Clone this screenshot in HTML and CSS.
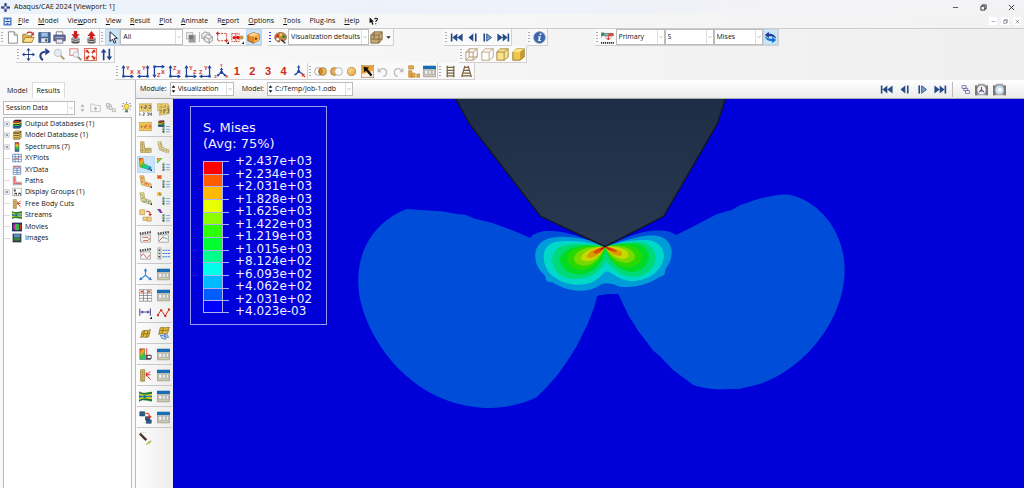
FILE: index.html
```html
<!DOCTYPE html>
<html lang="en">
<head>
<meta charset="utf-8">
<title>Abaqus/CAE 2024 [Viewport: 1]</title>
<link rel="stylesheet" href="styles.css">
</head>
<body>
<svg class="sprites" aria-hidden="true">
  <defs>
    <linearGradient id="gold" x1="0" y1="0" x2="1" y2="1"><stop offset="0" stop-color="#ffe9a8"/><stop offset="1" stop-color="#e0a030"/></linearGradient>
    <linearGradient id="rainbow" x1="0" y1="0" x2="0" y2="1"><stop offset="0" stop-color="#e22"/><stop offset=".3" stop-color="#fc2"/><stop offset=".6" stop-color="#2c3"/><stop offset="1" stop-color="#16d"/></linearGradient>
    <linearGradient id="rainbow-l" x1="0" y1="0" x2="1" y2="1"><stop offset="0" stop-color="#e22"/><stop offset=".25" stop-color="#fa2"/><stop offset=".45" stop-color="#3c3"/><stop offset=".75" stop-color="#1cc"/><stop offset="1" stop-color="#13c"/></linearGradient>
  </defs>
  <symbol id="app" viewBox="0 0 16 16"><path d="M6 1h4v5h5v4h-5v5H6v-5H1V6h5z" fill="#8a93c4" stroke="#4a5590"/><path d="M8 0v16M0 8h16" stroke="#2f3a78" stroke-width="1.6"/><circle cx="8" cy="8" r="2" fill="#fff"/></symbol>
  <symbol id="doc" viewBox="0 0 16 16"><path d="M1 1h14v14H1z" fill="#2c5fb8"/><path d="M3 3h10v10H3z" fill="#dce8fa"/><path d="M8 2l2 3H6zM8 14l2-3H6zM4 7h8v2H4z" fill="#1b469c"/></symbol>
  <symbol id="new" viewBox="0 0 16 16"><path d="M3 1h7l4 4v10H3z" fill="#fff" stroke="#777"/><path d="M10 1v4h4" fill="#ddd" stroke="#777"/></symbol>
  <symbol id="open" viewBox="0 0 16 16"><path d="M1 14V4h4l1 2h6v8z" fill="#e6b64c" stroke="#9b772a"/><path d="M1 14l3-6h11l-3 6z" fill="#ffe08a" stroke="#9b772a"/><path d="M6 3c2-2 5-2 7 0" fill="none" stroke="#d02b1c" stroke-width="1.600"/><path d="M14.500 1v4.500h-4z" fill="#d02b1c"/></symbol>
  <symbol id="save" viewBox="0 0 16 16"><path d="M1 2h14v12H1z" fill="#47689c" stroke="#36507a"/><path d="M4 2h8v5H4z" fill="#9fc0e4"/><path d="M4 9h8v5H4z" fill="#e9e9e9"/><path d="M9 10h2v3H9z" fill="#333"/></symbol>
  <symbol id="print" viewBox="0 0 16 16"><path d="M4 1h8v5H4z" fill="#fff" stroke="#667"/><path d="M1 5h14v7H1z" fill="#646c9c" stroke="#464c78"/><path d="M4 10h8v5H4z" fill="#e8ecf8" stroke="#667"/><path d="M3 8h10" stroke="#b4bde0"/></symbol>
  <symbol id="db-in" viewBox="0 0 16 16"><path d="M3 9v5c2 2 8 2 10 0V9z" fill="#555"/><ellipse cx="8" cy="9" rx="5" ry="2" fill="#aaa"/><path d="M3 11.500c3 1.500 7 1.500 10 0" stroke="#eee" fill="none"/><path d="M6 0h4v4h3L8 10 3 4h3z" fill="#cf1d1d"/></symbol>
  <symbol id="db-out" viewBox="0 0 16 16"><path d="M3 9v5c2 2 8 2 10 0V9z" fill="#555"/><ellipse cx="8" cy="9" rx="5" ry="2" fill="#aaa"/><path d="M3 12c3 1.500 7 1.500 10 0" stroke="#eee" fill="none"/><path d="M6 10h4V6h3L8 0 3 6h3z" fill="#cf1d1d"/></symbol>
  <symbol id="cursor" viewBox="0 0 16 16"><path d="M5 1v12l3-3 2 5 2-1-2-5h4z" fill="#fff" stroke="#223" stroke-width="1.200"/></symbol>
  <symbol id="overlap" viewBox="0 0 16 16"><path d="M3 2h8v8H3z" fill="#eee" stroke="#aaa"/><path d="M6 5h8v9H6z" fill="#999" stroke="#bbb"/><path d="M6 5h5v5H6z" fill="#777"/></symbol>
  <symbol id="cubes" viewBox="0 0 16 16"><g fill="#eee" stroke="#888"><path d="M1 4l4-3 6 2v5l-4 3-6-2z"/><path d="M4 7l4-3 6 3v5l-4 3-6-3z"/><path d="M4 7l6 3 4-3M10 10v5"/></g></symbol>
  <symbol id="rect-sel" viewBox="0 0 16 16"><path d="M2 3h11v9H2z" fill="none" stroke="#c8321e" stroke-dasharray="3 1"/><path d="M0 3h4M2 1v4M11 12h4M13 10v4" stroke="#c8321e" stroke-width="1.400"/><path d="M16 13v3h-3z" fill="#222"/></symbol>
  <symbol id="dots-sel" viewBox="0 0 16 16"><path d="M1 3h9v10H1z" fill="none" stroke="#c8321e" stroke-dasharray="2 1"/><circle cx="4" cy="8" r="2" fill="#d11"/><circle cx="8.500" cy="8" r="2.200" fill="#d11"/><circle cx="13" cy="8" r="2" fill="#e9a421" stroke="#84561c" stroke-width=".6"/><path d="M6 3v10" stroke="#d11"/><path d="M16 13v3h-3z" fill="#222"/></symbol>
  <symbol id="cube-3d" viewBox="0 0 16 16"><path d="M1 5l7-3 7 2v7l-7 4-7-3z" fill="#e28a23" stroke="#8d5418"/><path d="M1 5l7 2 7-3-7-2z" fill="#ffd38a"/><path d="M8 7v8" stroke="#8d5418"/><path d="M8 7l7-3v7l-7 4z" fill="#f6b04c"/><circle cx="11" cy="9.500" r="1.500" fill="#7a4515"/></symbol>
  <symbol id="palette" viewBox="0 0 16 16"><path d="M8 2c5 0 8 3 7 7s-5 3-6 2-2 0-2 2-6-1-6-5 3-6 7-6z" fill="#c58b4e" stroke="#7a4e22"/><circle cx="4.500" cy="6" r="1.700" fill="#d22"/><circle cx="8.500" cy="4.500" r="1.600" fill="#f5d835"/><circle cx="12" cy="7" r="1.700" fill="#1b8a35"/><circle cx="4.500" cy="10" r="1.500" fill="#fff"/><path d="M9 11l5 4" stroke="#222" stroke-width="1.500"/></symbol>
  <symbol id="cube-brown" viewBox="0 0 16 16"><path d="M1 5l4-4h10v9l-4 5H1z" fill="#c4a876" stroke="#7d6539"/><path d="M1 5h10v10M11 5l4-4M5 1v9H1M5 10h10" fill="none" stroke="#7d6539"/></symbol>
  <symbol id="caret" viewBox="0 0 16 16"><path d="M1 4h14l-7 8z" fill="#222"/></symbol>
  <symbol id="first" viewBox="0 0 16 16"><path d="M1 3h2v10H1zM9 3v10L3 8zM15.500 3v10L9 8z" fill="#254a87"/></symbol>
  <symbol id="prev" viewBox="0 0 16 16"><path d="M9 3v10L3 8zM11 3h2v10h-2z" fill="#254a87"/></symbol>
  <symbol id="next" viewBox="0 0 16 16"><path d="M3 3h2v10H3z" fill="#254a87"/><path d="M7 3.500v9l6-4.500z" fill="#7d9cc9" stroke="#254a87"/></symbol>
  <symbol id="last" viewBox="0 0 16 16"><path d="M13 3h2v10h-2zM7 3v10l6-5zM.5 3v10L7 8z" fill="#254a87"/></symbol>
  <symbol id="info" viewBox="0 0 16 16"><circle cx="8" cy="8" r="7.300" fill="#3c67ae" stroke="#9aa8c0"/><path d="M8.500 3h2l-.4 2h-2zM6.500 6.500h3L8.500 11h1.200v1.200H6.200L7.300 7.700h-1z" fill="#fff"/></symbol>
  <symbol id="field" viewBox="0 0 16 16"><path d="M1 1v7M0 5l4-2h11v3H5z" fill="#8fbcc4" stroke="#345" stroke-width=".7"/><path d="M1 2h3v3H1z" fill="#2b8b51"/><path d="M9 3h6v3H9z" fill="#d8452f"/><path d="M9 6v5M6 8l3 3 3-3" stroke="#c22" fill="none" stroke-width="1.200"/><path d="M0 14.500h16" stroke="#222" stroke-width="2.200" stroke-dasharray="1.500 1"/></symbol>
  <symbol id="sync" viewBox="0 0 16 16"><path d="M6 1L1 5l5 4V6.500c4-.5 7 1 9 3C14 5 10 3.200 6 3.500z" fill="#1e3f98"/><path d="M10 15l5-4-5-4v2.500c-4 .5-7-1-9-3C2 11 6 12.800 10 12.500z" fill="#1673cf"/></symbol>
  <symbol id="pan" viewBox="0 0 16 16"><path d="M8 0l2.500 3h-2v4.500H13v-2L16 8l-3 2.500v-2H8.500V13h2L8 16l-2.500-3h2V8.500H3v2L0 8l3-2.500v2h4.500V3h-2z" fill="#243f88"/></symbol>
  <symbol id="rotate" viewBox="0 0 16 16"><path d="M6 15C1 11 2 5 9 4.500" fill="none" stroke="#243f88" stroke-width="2.400"/><path d="M9 0l6 4.500L9 9z" fill="#243f88"/></symbol>
  <symbol id="zoom" viewBox="0 0 16 16"><circle cx="6" cy="6" r="4.500" fill="#e6ebee" stroke="#b4bbc0"/><path d="M9.500 9.500L14 14" stroke="#b09c7c" stroke-width="2.500"/></symbol>
  <symbol id="zoom-box" viewBox="0 0 16 16"><path d="M1 1h10v8H1z" fill="none" stroke="#d8604e"/><circle cx="8.500" cy="8" r="3.500" fill="#eef" stroke="#abb"/><path d="M11 11l4 4" stroke="#9c8b6f" stroke-width="2.300"/></symbol>
  <symbol id="fit" viewBox="0 0 16 16"><path d="M.5.500h15v15H.5z" fill="#fff" stroke="#d23a22"/><path d="M2 2h4L4.800 3.200 7 5.500 5.500 7 3.200 4.800 2 6zM14 2v4l-1.200-1.200L10.500 7 9 5.500l2.200-2.300L10 2zM2 14v-4l1.200 1.200L5.500 9 7 10.500l-2.200 2.300L6 14zM14 14h-4l1.200-1.200L9 10.500 10.500 9l2.300 2.200L14 10z" fill="#d23a22"/></symbol>
  <symbol id="updown" viewBox="0 0 16 16"><path d="M4.500 1L8 5.500H5.500V15h-2V5.500H1zM11.500 15L8 10.500h2.500V1h2v9.500H15z" fill="#243f88"/></symbol>
  <symbol id="box-wire" viewBox="0 0 16 16"><path d="M1 5h9v10H1zM5 1h10v10H5zM1 5l4-4M10 5l5-4M10 15l5-4M1 15l4-4" fill="none" stroke="#a88d5a"/></symbol>
  <symbol id="box-hidden" viewBox="0 0 16 16"><path d="M1 5l4-4h10v10l-5 4H1z" fill="#fff" stroke="#b09a6c"/><path d="M1 5h9v10M10 5l5-4" fill="none" stroke="#b09a6c"/></symbol>
  <symbol id="box-fill" viewBox="0 0 16 16"><path d="M1 5l4-4h10v10l-5 4H1z" fill="#f7e48a" stroke="#a07d3a"/><path d="M1 5h9v10M10 5l5-4" fill="none" stroke="#a07d3a"/></symbol>
  <symbol id="box-shade" viewBox="0 0 16 16"><path d="M1 5l4-4h10v10l-5 4H1z" fill="#f0c84c" stroke="#8d6b1e"/><path d="M1 5l4-4h10l-5 4z" fill="#ffe684"/><path d="M10 5v10l5-4V1z" fill="#c79a30"/></symbol>
  <symbol id="ax-right" viewBox="0 0 16 16"><path d="M3 3v11h10" fill="none" stroke="#1c45a0" stroke-width="1.600"/><path d="M3 0l2.500 4H.5zM16 14l-4 2.500v-5zM1.500 12.500h3v3h-3z" fill="#1c45a0"/></symbol>
  <symbol id="ax-left" viewBox="0 0 16 16"><path d="M13 3v11H3" fill="none" stroke="#1c45a0" stroke-width="1.600"/><path d="M13 0l2.500 4h-5zM0 14l4 2.500v-5zM11.500 12.500h3v3h-3z" fill="#1c45a0"/></symbol>
  <symbol id="ax-down" viewBox="0 0 16 16"><path d="M3 13V2h10" fill="none" stroke="#1c45a0" stroke-width="1.600"/><path d="M3 16l2.500-4H.5zM16 2l-4 2.500v-5zM1.500.500h3v3h-3z" fill="#1c45a0"/></symbol>
  <symbol id="triad" viewBox="0 0 16 16"><path d="M8 4v5l-5 4M8 9l5 4" fill="none" stroke="#1c45a0" stroke-width="1.500"/><circle cx="8" cy="9" r="2" fill="#1c45a0"/><path d="M8 3l2 3H6zM2 14l1.500-3 2 2.500zM14 14l-3.500-.5 2-2.500z" fill="#1c45a0"/></symbol>
  <symbol id="triad-pick" viewBox="0 0 16 16"><path d="M7 2v6l-4 4M7 8l5 3" fill="none" stroke="#1c45a0" stroke-width="1.500"/><path d="M7 0l2 3H5zM1 13l1.500-3 2 2z" fill="#1c45a0"/><circle cx="7" cy="8" r="1.800" fill="#1c45a0"/><path d="M10 10l5 5M11 14l3-3" stroke="#d23a22" stroke-width="1.500"/></symbol>
  <symbol id="venn-and" viewBox="0 0 16 16"><circle cx="5.500" cy="8" r="4.800" fill="#fff" stroke="#999"/><circle cx="10.500" cy="8" r="4.800" fill="#f0b65c" stroke="#a67a3c"/><path d="M8 4a5 5 0 0 1 0 8 5 5 0 0 1 0-8z" fill="#d68c26" stroke="#916324"/></symbol>
  <symbol id="venn-sub" viewBox="0 0 16 16"><circle cx="5.500" cy="8" r="4.800" fill="#eba844" stroke="#a67a3c"/><circle cx="10.500" cy="8" r="4.800" fill="#fafafa" stroke="#aaa"/></symbol>
  <symbol id="venn-one" viewBox="0 0 16 16"><circle cx="8" cy="8" r="5" fill="url(#gold)" stroke="#b87b24"/></symbol>
  <symbol id="arrow-box" viewBox="0 0 16 16"><path d="M0 0h16v16H0z" fill="#f7efe0" stroke="#74542c"/><path d="M1 1h14v6L1 11z" fill="#e9a23a"/><path d="M3 2l7 1-2 2 6 7-2 2-6-7-2 2z" fill="#17110c"/></symbol>
  <symbol id="undo" viewBox="0 0 16 16"><path d="M4 7c4-5 10-2 9 3-.5 3-3 4-4 4" fill="none" stroke="#bbb" stroke-width="1.500"/><path d="M2 3v6h5z" fill="#bbb"/></symbol>
  <symbol id="redo" viewBox="0 0 16 16"><path d="M12 7C8 2 2 5 3 10c.5 3 3 4 4 4" fill="none" stroke="#bbb" stroke-width="1.500"/><path d="M14 3v6H9z" fill="#bbb"/></symbol>
  <symbol id="blocks" viewBox="0 0 16 16"><path d="M2 1h6v4H2zM2 7h4v8H2zM5 10h5v5H5zM12 11h4v4h-4z" fill="#eba844" stroke="#b4823a" stroke-width=".8"/></symbol>
  <symbol id="table" viewBox="0 0 16 16"><path d="M.5 1.500h15v13H.5z" fill="#ccc8b4" stroke="#a19e8c"/><path d="M0 1h16v4H0z" fill="#176db8"/><path d="M2 6.500h4v5H2zM7 6.500h3v5H7zM11.500 6.500H14v5h-2.500z" fill="#f1f2f5" stroke="#999" stroke-width=".6"/></symbol>
  <symbol id="ladder" viewBox="0 0 16 16"><path d="M4 1v14M12 1v14M3 3h10M3 6.500h10M3 10h10M3 13.500h10" stroke="#7a6540" stroke-width="1.500"/></symbol>
  <symbol id="ladder-p" viewBox="0 0 16 16"><path d="M6 1L2 15M10 1l4 14M5 3h6M4 6.500h8M3 10h10M2 13.500h12" stroke="#7a6540" stroke-width="1.500"/></symbol>
  <symbol id="tiles" viewBox="0 0 16 16"><path d="M2 1h7v5H2zM5 6h7v4H5zM8 10h7v5H8z" fill="#fff" stroke="#6a5ca5" stroke-width="1.400"/></symbol>
  <symbol id="camera-a" viewBox="0 0 16 16"><path d="M0 3h3l1-2h8l1 2h3v12H0z" fill="#a2a4a5"/><path d="M0 3h3v12H0zM13 3h3v12h-3z" fill="#77797b"/><circle cx="8" cy="8.500" r="5.200" fill="#eef6fb"/><path d="M8 5v4l-3 2M8 9l3 2" stroke="#2a62c0" fill="none" stroke-width="1.300"/><circle cx="8" cy="9" r="1.400" fill="#d22"/></symbol>
  <symbol id="camera-b" viewBox="0 0 16 16"><path d="M0 3h3l1-2h8l1 2h3v12H0z" fill="#a2a4a5"/><path d="M0 3h3v12H0zM13 3h3v12h-3z" fill="#77797b"/><circle cx="8" cy="8.500" r="5.200" fill="#d3e7f5"/><circle cx="8.500" cy="8.500" r="3.300" fill="#fff" stroke="#a8d0ea"/></symbol>
  <symbol id="chev" viewBox="0 0 16 16"><path d="M2 5l6 6 6-6" fill="none" stroke="#777" stroke-width="2"/></symbol>
  <symbol id="spin" viewBox="0 0 8 16"><path d="M4 2l3 4H1zM4 14l3-4H1z" fill="currentColor"/></symbol>
  <symbol id="folder-up" viewBox="0 0 16 16"><path d="M1 3h5l1 2h8v9H1z" fill="#f6f6f6" stroke="#b5b5b5"/><path d="M8 7l2.500 3H9v2H7v-2H5.500z" fill="#aaa"/></symbol>
  <symbol id="links" viewBox="0 0 16 16"><path d="M2 2h4v4H2zM6 7h4v4H6zM11 10h4v4h-4zM6 4h3v3M3 6v3h3" fill="none" stroke="#b0b0b0" stroke-width="1.300"/></symbol>
  <symbol id="bulb" viewBox="0 0 16 16"><path d="M8 3c4 0 4 4 2 6v2H6V9C4 7 4 3 8 3z" fill="#ffe44a" stroke="#a48b10"/><path d="M6 12h4v3H6z" fill="#476"/><path d="M8 0v1.500M1 6h2M13 6h2M2.500 1.500l1.500 1.500M13.500 1.500L12 3M2.500 11L4 9.500M13.500 11L12 9.500" stroke="#222"/></symbol>
  <symbol id="plus" viewBox="0 0 16 16"><path d="M2 2h12v12H2z" fill="#fff" stroke="#9aa3b3" stroke-width="1.500"/><path d="M5 8h6M8 5v6" stroke="#345" stroke-width="1.600"/></symbol>
  <symbol id="t-odb" viewBox="0 0 16 16"><path d="M2 3l3-2h10v11l-3 3H2z" fill="#1e222c"/><path d="M4 3h9l-2 2H2z" fill="#e33"/><path d="M1 6h10l4-2v2l-4 2H1z" fill="#f5c52c"/><path d="M1 9h10l4-2v2l-4 2H1z" fill="#3bb44a"/><path d="M1 12h10l4-2v2l-4 2H1z" fill="#2271cf"/></symbol>
  <symbol id="t-mdb" viewBox="0 0 16 16"><path d="M2 3l3-2h10v11l-3 3H2z" fill="#54431c"/><path d="M4 2h10l-2 2H2zM1 6h10l4-2v2l-4 2H1zM1 9h10l4-2v2l-4 2H1zM1 12h10l4-2v2l-4 2H1z" fill="#e5c56a"/></symbol>
  <symbol id="t-spec" viewBox="0 0 16 16"><path d="M5 1h6v14H5z" fill="url(#rainbow)" stroke="#333"/></symbol>
  <symbol id="t-plot" viewBox="0 0 16 16"><path d="M1 2h14v12H1zM1 6h14M1 10h14M5 1v14M10 1v14" fill="#fff" stroke="#3f6bac"/><path d="M2 12l4-4 3 2 5-6" stroke="#d55" fill="none" stroke-width="1.300"/></symbol>
  <symbol id="t-data" viewBox="0 0 16 16"><path d="M2 2h12v13H2zM2 6h12M2 9h12M2 12h12M8 2v13" fill="#fff" stroke="#3f6bac"/><path d="M3 1l4 4M7 1L3 5M9 1l4 4M13 1L9 5" stroke="#d33"/></symbol>
  <symbol id="t-path" viewBox="0 0 16 16"><path d="M2 1h4v9h9v4H2z" fill="#f5dddd" stroke="#777"/><path d="M4 2v10h10" fill="none" stroke="#c22"/></symbol>
  <symbol id="t-disp" viewBox="0 0 16 16"><path d="M1 2h14v12H1z" fill="#fff" stroke="#999"/><path d="M3 4h3v3H3zM4 9h4v5H4zM10 9h4v5h-4z" fill="#444"/><path d="M5 11h2v3H5zM11 11h2v3h-2z" fill="#fff"/></symbol>
  <symbol id="t-cut" viewBox="0 0 16 16"><path d="M2 1h5v14H2z" fill="#e3c869" stroke="#9a8140"/><path d="M2 4h5M2 7h5M2 10h5M2 13h5M4.500 1v14" stroke="#9a8140" stroke-width=".7"/><path d="M14 3L9 7l5 6M9 7h5M9 4v5" stroke="#d22" fill="none" stroke-width="1.200"/></symbol>
  <symbol id="t-stream" viewBox="0 0 16 16"><path d="M0 2c6 3 10 0 16 0v12c-6 0-10-3-16 0z" fill="#2b9a3c"/><path d="M0 4c6 3 10 1 16 1v6c-6 0-10-2-16 1z" fill="#dfce2b"/><path d="M0 6c5 2 11 1 16 1v2c-5 0-11-1-16 1z" fill="#1a7cb8"/><path d="M0 2c5 4 11 3 16 1M0 14c5-4 11-3 16-1" stroke="#134b2c" fill="none" stroke-width=".8"/><circle cx="7" cy="8" r="2" fill="#14808b"/></symbol>
  <symbol id="t-movie" viewBox="0 0 16 16"><path d="M0 1h16v14H0z" fill="#2b2860"/><path d="M2 4h3v8H2z" fill="#d22ba0"/><path d="M5 3h6v10H5z" fill="#35bd4a"/><path d="M12 4h3v8h-3z" fill="#d5342c"/></symbol>
  <symbol id="t-image" viewBox="0 0 16 16"><path d="M1 1h14v14H1z" fill="#2c3d46"/><path d="M3 2h10v5H3z" fill="#5d90c9"/><path d="M3 7h10v5H3z" fill="#3f7f49"/></symbol>
  <symbol id="b-num" viewBox="0 0 16 16"><path d="M0 1h16v9H0z" fill="#f3d673" stroke="#b39a4e" stroke-width=".8"/><path d="M0 5.500h16M5 1v9M11 1v9" stroke="#c0a555" stroke-width=".7"/><path d="M3 3v4M7 3h2v2H7v2h2M12 3h2v4h-2" stroke="#444" fill="none" stroke-width=".8"/><path d="M1 12v4M5 12h1.500v2H5v2h2M10 12h1.500v4H10M13 12v2h2v-2 4" stroke="#444" fill="none" stroke-width=".8"/></symbol>
  <symbol id="b-num2" viewBox="0 0 16 16"><path d="M0 1h14v8H0zM3 6l13-2-1 9-12 2z" fill="#f3d673" stroke="#b39a4e" stroke-width=".8"/><path d="M1 4h13M5 1v6M10 1v6" stroke="#b39a4e" stroke-width=".7"/><path d="M5 8v5M8 8h2v2H8v2h2M12 7h2v5h-2" stroke="#444" fill="none" stroke-width=".8"/></symbol>
  <symbol id="b-num3" viewBox="0 0 16 16"><path d="M0 3h16v10H0z" fill="#f5d160" stroke="#b9963c" stroke-width=".8"/><path d="M0 8h16M5 3v10M11 3v10" stroke="#c6a246" stroke-width=".7"/><path d="M3 6v4M7 6h2v2H7v2h2M12 6h2v4h-2" stroke="#d0502b" fill="none"/></symbol>
  <symbol id="opts" viewBox="0 0 16 16"><path d="M6.500 6h3v10h-3z" fill="#bbb"/><path d="M7 7h2v2H7zM7 10.500h2v2H7z" fill="#484"/><path d="M7 13.500h2v2H7z" fill="#555"/><path d="M11 8h6M11 11.500h6M11 14.500h6" stroke="#6ea5e2" stroke-width="1.100"/></symbol>
  <symbol id="mesh-l" viewBox="0 0 16 16"><path d="M2 1h4l1 8h8v5H2z" fill="#ebd88f" stroke="#9d8748" stroke-width=".8"/><path d="M2 4h4M2 7h5M2 10h13M4 1v13M8 9v5M11 9v5M2 12h13" stroke="#9d8748" stroke-width=".7"/></symbol>
  <symbol id="mesh-bent" viewBox="0 0 16 16"><path d="M1 1h4l2 7 8 3-1 4-11-4z" fill="#f3e7b9" stroke="#b3a26c" stroke-width=".8"/><path d="M1 4h5M2 7h5M4 1l2 11M9 9l-1 4M12 10l-1 4M3 9l12 4" stroke="#a18e54" stroke-width=".7"/></symbol>
  <symbol id="contour" viewBox="0 0 16 16"><path d="M0 0h5l1 7 9 4-1 4-13-4z" fill="url(#rainbow-l)" stroke="#555" stroke-width=".4"/><path d="M16 13v3h-2z" fill="#222"/></symbol>
  <symbol id="symb" viewBox="0 0 16 16"><path d="M1 1h5l1 7 8 3-1 4-11-3z" fill="#f1cc70" stroke="#ac8e4b" stroke-width=".8"/><path d="M3 3l2 2M5 3L3 5M3 7l2 2M5 7L3 9M8 9l2 3M11 10l1 3M6 11h3" stroke="#d84a35"/><path d="M16 13v3h-2z" fill="#222"/></symbol>
  <symbol id="mat" viewBox="0 0 16 16"><path d="M1 1h5l1 7 8 3-1 4-11-3z" fill="#eedc8a" stroke="#a3955a" stroke-width=".8"/><path d="M3 3l2 2M3 8l3-1M8 9l2 3M12 11v3M5 11l3 1" stroke="#2a83ad"/><path d="M16 13v3h-2z" fill="#222"/></symbol>
  <symbol id="morph" viewBox="0 0 16 16"><path d="M1 1h6v6H1zM5 10h5v4H5zM10 10h5v5h-5z" fill="#f4cf83" stroke="#b9924a" stroke-width=".8"/><path d="M9 3c3-1 5 1 5 4" fill="none" stroke="#d02b1c" stroke-width="1.400"/><path d="M11.500 6H16l-2.500 3z" fill="#d02b1c"/></symbol>
  <symbol id="clap" viewBox="0 0 16 16"><path d="M2 6h12v9H2z" fill="#f6f6f6" stroke="#888" stroke-width=".8"/><path d="M1 4.500l14-2" stroke="#444" stroke-width="2.800" stroke-dasharray="1.800 1.200"/></symbol>
  <symbol id="bullets" viewBox="0 0 16 16"><path d="M1 1h4v14H1z" fill="#e5e5e5" stroke="#999" stroke-width=".8"/><path d="M2 3h2v2H2zM2 11h2v2H2z" fill="#444"/><path d="M2 7h2v2H2z" fill="#2a2"/><path d="M7 4h9M7 8h9M7 12h9" stroke="#2d7bd8" stroke-width="1.500" stroke-dasharray="2.500 .8"/></symbol>
  <symbol id="triad-b" viewBox="0 0 16 16"><path d="M8 2v7l-5 4M8 9l5 4" fill="none" stroke="#3e88d8" stroke-width="1.400"/><path d="M8 0l2 4H6zM0 15l2-4 2.500 3zM16 15l-4.500-1L14 11z" fill="#2a73cc"/></symbol>
  <symbol id="xytab" viewBox="0 0 16 16"><path d="M0 1h16v14H0zM0 5h16M0 8h16M0 11.500h16M5.500 1v14M10.500 1v14" fill="#fff" stroke="#777" stroke-width=".9"/><path d="M2 2h3v2H2zM11 2h3v2h-3z" fill="#d42"/></symbol>
  <symbol id="span" viewBox="0 0 16 16"><path d="M1 3v9M14 3v9M2 7.500h11" stroke="#4b4b9f" stroke-width="1.300"/><path d="M2 7.500l3-2v4zM13 7.500l-3-2v4z" fill="#4b4b9f"/><path d="M16 13v3h-3z" fill="#222"/></symbol>
  <symbol id="zig" viewBox="0 0 16 16"><path d="M1 11l4-6 5 7 5-8" fill="none" stroke="#d02b1c" stroke-width="1.200"/><path d="M0 10h2.500v2.500H0zM4 4h2.500v2.500H4zM9 11h2.500v2.500H9zM13.500 3H16v2.500h-2.500z" fill="#d02b1c"/></symbol>
  <symbol id="sheet" viewBox="0 0 16 16"><path d="M4 5c4-2 6 1 10-2l-2 9c-4 2-6-1-10 1z" fill="#e3bc3c" stroke="#755b13" stroke-width=".8"/><path d="M3 9c4-2 6 1 10-2M7 4l-2 8M11 5l-2 8" stroke="#755b13" fill="none" stroke-width=".8"/></symbol>
  <symbol id="sheet2" viewBox="0 0 16 16"><path d="M4 1c4-1 6 1 11-1l-2 8c-4 2-7-1-11 1z" fill="#e3bc3c" stroke="#755b13" stroke-width=".8"/><path d="M3 5c4-2 7 1 11-2M8 1L6 8" stroke="#755b13" fill="none" stroke-width=".8"/><path d="M4 10l5 1 2 4-5-1zM9 9l4 1 1 3-4-1z" fill="#cfe0fa" stroke="#3a6fc0"/></symbol>
  <symbol id="view-cut" viewBox="0 0 16 16"><path d="M1 1h6v8h7v5H1z" fill="url(#rainbow-l)" stroke="#444" stroke-width=".6"/><path d="M9.500 0v15" stroke="#d22"/><path d="M10 9h5v4h-5z" fill="#fff" stroke="#222"/></symbol>
  <symbol id="overlay" viewBox="0 0 16 16"><path d="M1 1h6v5H1zM8 7h5v4H8zM9 11h6v4H9z" fill="#2d5f91" stroke="#1e3a58" stroke-width=".8"/><path d="M8 3c3-1 5 1 5 4M11.500 6l1.500 3 2-3" fill="none" stroke="#d0331f" stroke-width="1.400"/></symbol>
  <symbol id="probe" viewBox="0 0 16 16"><path d="M1 2l8 8" stroke="#4a352a" stroke-width="3"/><path d="M1 0h9" stroke="#aaa" stroke-dasharray="2 1"/><path d="M8 16l3-4 5-2-3 4z" fill="#6cc45a"/><path d="M8 16l3-4 2 1-2 2z" fill="#e5d03b"/></symbol>
  <symbol id="help" viewBox="0 0 16 16"><path d="M1 1v10l3-2 2 5 2-1-2-5h3z" fill="#111"/><path d="M10 4c1-3 5-2 5 0s-3 2-3 5M12 11v2" fill="none" stroke="#111" stroke-width="1.900"/></symbol>
  <symbol id="w-min" viewBox="0 0 16 16"><path d="M2 8h12" stroke="currentColor" stroke-width="1.500"/></symbol>
  <symbol id="w-rest" viewBox="0 0 16 16"><path d="M2 5h9v9H2zM5 5V2h9v9h-3" fill="none" stroke="currentColor" stroke-width="1.800"/></symbol>
  <symbol id="w-close" viewBox="0 0 16 16"><path d="M2 2l12 12M14 2L2 14" stroke="currentColor" stroke-width="1.800"/></symbol>
</svg>

<div class="app">
  <header class="titlebar">
    <svg class="i sm"><use href="#app"/></svg>
    <h1>Abaqus/CAE 2024 [Viewport: 1]</h1>
    <div class="win">
      <button aria-label="Minimize"><svg class="i xs"><use href="#w-min"/></svg></button>
      <button aria-label="Restore"><svg class="i xs"><use href="#w-rest"/></svg></button>
      <button aria-label="Close"><svg class="i xs"><use href="#w-close"/></svg></button>
    </div>
  </header>
  <nav class="menubar">
    <svg class="i sm"><use href="#doc"/></svg>
    <div class="menus">
      <button><u>F</u>ile</button><button><u>M</u>odel</button><button>Vie<u>w</u>port</button><button><u>V</u>iew</button><button><u>R</u>esult</button><button><u>P</u>lot</button><button><u>A</u>nimate</button><button>R<u>e</u>port</button><button><u>O</u>ptions</button><button><u>T</u>ools</button><button>Plu<u>g</u>-ins</button><button><u>H</u>elp</button><button aria-label="Context help"><svg class="i sm"><use href="#help"/></svg></button>
    </div>
    <div class="win mdi">
      <button aria-label="Minimize viewport"><svg class="i tiny"><use href="#w-min"/></svg></button>
      <button aria-label="Restore viewport"><svg class="i tiny"><use href="#w-rest"/></svg></button>
      <button aria-label="Close viewport"><svg class="i tiny"><use href="#w-close"/></svg></button>
    </div>
  </nav>

  <div class="toolbars">
    <div class="bar-row">
      <div class="bar w-file">
        <i class="grip"></i>
        <button aria-label="New"><svg class="i"><use href="#new"/></svg></button>
        <button aria-label="Open"><svg class="i"><use href="#open"/></svg></button>
        <button aria-label="Save"><svg class="i"><use href="#save"/></svg></button>
        <button aria-label="Print"><svg class="i"><use href="#print"/></svg></button>
        <button aria-label="Import"><svg class="i"><use href="#db-in"/></svg></button>
        <button aria-label="Export"><svg class="i"><use href="#db-out"/></svg></button>
      </div>
      <div class="bar w-select">
        <i class="grip"></i>
        <button class="on" aria-label="Select"><svg class="i"><use href="#cursor"/></svg></button>
        <div class="combo c-all"><select aria-label="Selection filter"><option>All</option></select><svg class="chev"><use href="#chev"/></svg></div>
        <button aria-label="Overlap"><svg class="i"><use href="#overlap"/></svg></button>
        <i class="sep"></i>
        <button aria-label="Entities"><svg class="i"><use href="#cubes"/></svg></button>
        <button aria-label="Drag shape"><svg class="i"><use href="#rect-sel"/></svg></button>
        <button aria-label="Inside selection"><svg class="i"><use href="#dots-sel"/></svg></button>
        <button class="on" aria-label="Solid"><svg class="i"><use href="#cube-3d"/></svg></button>
      </div>
      <div class="bar w-color">
        <i class="grip blue"></i>
        <button aria-label="Color code"><svg class="i"><use href="#palette"/></svg></button>
        <div class="combo c-vis"><select aria-label="Color coding"><option>Visualization defaults</option></select><svg class="chev"><use href="#chev"/></svg></div>
        <button aria-label="Translucency"><svg class="i"><use href="#cube-brown"/></svg></button>
        <button class="narrow" aria-label="More"><svg class="i tiny"><use href="#caret"/></svg></button>
      </div>
      <div class="bar w-frames">
        <i class="grip"></i>
        <button aria-label="First"><svg class="i"><use href="#first"/></svg></button>
        <button aria-label="Previous"><svg class="i"><use href="#prev"/></svg></button>
        <button aria-label="Next"><svg class="i"><use href="#next"/></svg></button>
        <button aria-label="Last"><svg class="i"><use href="#last"/></svg></button>
      </div>
      <div class="bar w-info">
        <i class="grip"></i>
        <button aria-label="Query"><svg class="i"><use href="#info"/></svg></button>
      </div>
      <div class="bar w-field">
        <i class="grip"></i>
        <button aria-label="Field output"><svg class="i"><use href="#field"/></svg></button>
        <div class="combo c-f"><select aria-label="Variable type"><option>Primary</option></select><svg class="chev"><use href="#chev"/></svg></div>
        <div class="combo c-f"><select aria-label="Variable"><option>S</option></select><svg class="chev"><use href="#chev"/></svg></div>
        <div class="combo c-f"><select aria-label="Invariant"><option>Mises</option></select><svg class="chev"><use href="#chev"/></svg></div>
        <button class="on" aria-label="Sync"><svg class="i"><use href="#sync"/></svg></button>
      </div>
    </div>
    <div class="bar-row">
      <div class="bar w-view">
        <i class="grip"></i>
        <button aria-label="Pan"><svg class="i"><use href="#pan"/></svg></button>
        <button aria-label="Rotate"><svg class="i"><use href="#rotate"/></svg></button>
        <button aria-label="Magnify"><svg class="i"><use href="#zoom"/></svg></button>
        <button aria-label="Box zoom"><svg class="i"><use href="#zoom-box"/></svg></button>
        <button aria-label="Fit"><svg class="i"><use href="#fit"/></svg></button>
        <button aria-label="Cycle"><svg class="i"><use href="#updown"/></svg></button>
      </div>
      <div class="bar w-render">
        <i class="grip"></i>
        <button aria-label="Wireframe"><svg class="i"><use href="#box-wire"/></svg></button>
        <button aria-label="Hidden"><svg class="i"><use href="#box-hidden"/></svg></button>
        <button aria-label="Filled"><svg class="i"><use href="#box-fill"/></svg></button>
        <button aria-label="Shaded"><svg class="i"><use href="#box-shade"/></svg></button>
      </div>
    </div>
    <div class="bar-row">
      <div class="bar w-axes">
        <i class="grip"></i>
        <button aria-label="XY view"><svg class="i ax" viewBox="0 0 16 16"><use href="#ax-right"/><text x="6" y="6">Y</text><text x="11" y="11">X</text></svg></button>
        <button aria-label="Back view"><svg class="i ax" viewBox="0 0 16 16"><use href="#ax-left"/><text x="6" y="6">Y</text><text x="0" y="11">X</text></svg></button>
        <button aria-label="XZ view"><svg class="i ax" viewBox="0 0 16 16"><use href="#ax-down"/><text x="6" y="15">Z</text><text x="11" y="11">X</text></svg></button>
        <button aria-label="ZX view"><svg class="i ax" viewBox="0 0 16 16"><use href="#ax-right"/><text x="6" y="6">Z</text><text x="11" y="11">X</text></svg></button>
        <button aria-label="YZ view"><svg class="i ax" viewBox="0 0 16 16"><use href="#ax-right"/><text x="6" y="6">Y</text><text x="11" y="11">Z</text></svg></button>
        <button aria-label="ZY view"><svg class="i ax" viewBox="0 0 16 16"><use href="#ax-left"/><text x="6" y="6">Y</text><text x="0" y="11">Z</text></svg></button>
        <button aria-label="Iso view"><svg class="i ax iso" viewBox="0 0 16 16"><use href="#triad"/><text x="6" y="3">Y</text><text x="-1" y="16">Z</text><text x="13" y="16">X</text></svg></button>
        <button class="num">1</button><button class="num">2</button><button class="num">3</button><button class="num">4</button>
        <button aria-label="Pick view"><svg class="i"><use href="#triad-pick"/></svg></button>
      </div>
      <div class="bar w-groups">
        <i class="grip"></i>
        <button aria-label="Replace"><svg class="i"><use href="#venn-and"/></svg></button>
        <button aria-label="Remove"><svg class="i"><use href="#venn-sub"/></svg></button>
        <button aria-label="All"><svg class="i"><use href="#venn-one"/></svg></button>
        <button aria-label="Replace selected"><svg class="i"><use href="#arrow-box"/></svg></button>
        <button aria-label="Undo"><svg class="i"><use href="#undo"/></svg></button>
        <button aria-label="Redo"><svg class="i"><use href="#redo"/></svg></button>
        <button aria-label="Create group"><svg class="i"><use href="#blocks"/></svg></button>
        <button aria-label="Group manager"><svg class="i"><use href="#table"/></svg></button>
      </div>
      <div class="bar w-persp">
        <i class="grip"></i>
        <button aria-label="Parallel"><svg class="i"><use href="#ladder"/></svg></button>
        <button aria-label="Perspective"><svg class="i"><use href="#ladder-p"/></svg></button>
      </div>
    </div>
  </div>

  <main class="work">
    <aside class="side">
      <div class="tabs"><button>Model</button><button class="active">Results</button></div>
      <div class="side-tools">
        <div class="combo c-sess"><select aria-label="Session"><option>Session Data</option></select><svg class="chev"><use href="#chev"/></svg></div>
        <button class="spin" aria-label="Step"><svg class="spin-i"><use href="#spin"/></svg></button>
        <button aria-label="Up"><svg class="i"><use href="#folder-up"/></svg></button>
        <button aria-label="Links"><svg class="i"><use href="#links"/></svg></button>
        <button aria-label="Tip"><svg class="i"><use href="#bulb"/></svg></button>
      </div>
      <div class="tree-box">
        <ul class="tree">
          <li><svg class="exp"><use href="#plus"/></svg><svg class="ti"><use href="#t-odb"/></svg>Output Databases (1)</li>
          <li><svg class="exp"><use href="#plus"/></svg><svg class="ti"><use href="#t-mdb"/></svg>Model Database (1)</li>
          <li><svg class="exp"><use href="#plus"/></svg><svg class="ti"><use href="#t-spec"/></svg>Spectrums (7)</li>
          <li><i class="exp"></i><svg class="ti"><use href="#t-plot"/></svg>XYPlots</li>
          <li><i class="exp"></i><svg class="ti"><use href="#t-data"/></svg>XYData</li>
          <li><i class="exp"></i><svg class="ti"><use href="#t-path"/></svg>Paths</li>
          <li><svg class="exp"><use href="#plus"/></svg><svg class="ti"><use href="#t-disp"/></svg>Display Groups (1)</li>
          <li><i class="exp"></i><svg class="ti"><use href="#t-cut"/></svg>Free Body Cuts</li>
          <li><i class="exp"></i><svg class="ti"><use href="#t-stream"/></svg>Streams</li>
          <li><i class="exp"></i><svg class="ti"><use href="#t-movie"/></svg>Movies</li>
          <li><i class="exp"></i><svg class="ti"><use href="#t-image"/></svg>Images</li>
        </ul>
      </div>
    </aside>

    <section class="stage">
      <div class="context">
        <label for="module">Module:</label>
        <div class="combo c-mod"><svg class="spin-i"><use href="#spin"/></svg><select id="module"><option>Visualization</option></select><svg class="chev"><use href="#chev"/></svg></div>
        <label for="model">Model:</label>
        <div class="combo c-odb"><svg class="spin-i"><use href="#spin"/></svg><select id="model"><option>C:/Temp/Job-1.odb</option></select><svg class="chev"><use href="#chev"/></svg></div>
        <div class="player">
          <button aria-label="First frame"><svg class="i"><use href="#first"/></svg></button>
          <button aria-label="Previous frame"><svg class="i"><use href="#prev"/></svg></button>
          <button aria-label="Next frame"><svg class="i"><use href="#next"/></svg></button>
          <button aria-label="Last frame"><svg class="i"><use href="#last"/></svg></button>
          <i class="sep"></i>
          <button aria-label="Link viewports"><svg class="i sm"><use href="#tiles"/></svg></button>
          <button aria-label="Snapshot"><svg class="i"><use href="#camera-a"/></svg></button>
          <button aria-label="Camera"><svg class="i"><use href="#camera-b"/></svg></button>
        </div>
      </div>
      <div class="canvas-row">
        <div class="toolbox">
          <div class="tg">
            <button aria-label="Common plot options"><svg class="i"><use href="#b-num"/></svg></button>
            <button aria-label="Superimpose"><svg class="i"><use href="#b-num2"/></svg></button>
            <button aria-label="Labels"><svg class="i"><use href="#b-num3"/></svg></button>
            <button aria-label="Result options"><svg class="i" viewBox="0 0 16 16"><use href="#opts"/><svg width="10" height="9"><use href="#t-odb"/></svg></svg></button>
          </div>
          <div class="tg">
            <button aria-label="Undeformed"><svg class="i"><use href="#mesh-l"/></svg></button>
            <button aria-label="Deformed"><svg class="i"><use href="#mesh-bent"/></svg></button>
            <button class="on" aria-label="Contours"><svg class="i"><use href="#contour"/></svg></button>
            <button aria-label="Contour options"><svg class="i" viewBox="0 0 16 16"><use href="#opts"/><path d="M0 0h7L0 7z" fill="url(#rainbow-l)"/></svg></button>
            <button aria-label="Symbols"><svg class="i"><use href="#symb"/></svg></button>
            <button aria-label="Symbol options"><svg class="i" viewBox="0 0 16 16"><use href="#opts"/><path d="M0 0h6v5H0z" fill="#f0a43c"/><path d="M1 1l4 3M5 1L1 4" stroke="#d22"/></svg></button>
            <button aria-label="Material orientations"><svg class="i"><use href="#mat"/></svg></button>
            <button aria-label="Orientation options"><svg class="i" viewBox="0 0 16 16"><use href="#opts"/><path d="M0 0h6v5H0z" fill="#f4c64e"/><path d="M3 1v2h2" stroke="#26b" fill="none"/></svg></button>
            <button aria-label="Superimpose plots"><svg class="i"><use href="#morph"/></svg></button>
            <button aria-label="Superimpose options"><svg class="i" viewBox="0 0 16 16"><use href="#opts"/><path d="M0 0h4l3 5H4z" fill="#7c3a9e"/></svg></button>
          </div>
          <div class="tg">
            <button aria-label="Scale factor"><svg class="i" viewBox="0 0 16 16"><use href="#clap"/><path d="M4 9h7l2 2-2 2H5" fill="none" stroke="#c43"/></svg></button>
            <button aria-label="Time history"><svg class="i" viewBox="0 0 16 16"><use href="#clap"/><path d="M3 13l4-4 6 2" fill="none" stroke="#2a8"/><path d="M3 13l5-5" stroke="#c43"/></svg></button>
            <button aria-label="Harmonic"><svg class="i" viewBox="0 0 16 16"><use href="#clap"/><path d="M3 11c2-5 4-1 5 1s3 2 5-2" fill="none" stroke="#c43"/></svg></button>
            <button aria-label="Animation options"><svg class="i"><use href="#bullets"/></svg></button>
          </div>
          <div class="tg">
            <button aria-label="Coordinate system"><svg class="i"><use href="#triad-b"/></svg></button>
            <button aria-label="Systems manager"><svg class="i"><use href="#table"/></svg></button>
          </div>
          <div class="tg">
            <button aria-label="XY data"><svg class="i"><use href="#xytab"/></svg></button>
            <button aria-label="XY manager"><svg class="i"><use href="#table"/></svg></button>
            <button aria-label="XY axis"><svg class="i"><use href="#span"/></svg></button>
            <button aria-label="XY curve"><svg class="i"><use href="#zig"/></svg></button>
          </div>
          <div class="tg">
            <button aria-label="Field"><svg class="i"><use href="#sheet"/></svg></button>
            <button aria-label="Field from fields"><svg class="i"><use href="#sheet2"/></svg></button>
          </div>
          <div class="tg">
            <button aria-label="View cut"><svg class="i"><use href="#view-cut"/></svg></button>
            <button aria-label="View cut manager"><svg class="i"><use href="#table"/></svg></button>
          </div>
          <div class="tg">
            <button aria-label="Free body"><svg class="i"><use href="#t-cut"/></svg></button>
            <button aria-label="Free body manager"><svg class="i"><use href="#table"/></svg></button>
          </div>
          <div class="tg">
            <button aria-label="Stream"><svg class="i"><use href="#t-stream"/></svg></button>
            <button aria-label="Stream manager"><svg class="i"><use href="#table"/></svg></button>
          </div>
          <div class="tg">
            <button aria-label="Overlay"><svg class="i"><use href="#overlay"/></svg></button>
            <button aria-label="Overlay manager"><svg class="i"><use href="#table"/></svg></button>
          </div>
          <div class="tg last">
            <button aria-label="Probe"><svg class="i"><use href="#probe"/></svg></button>
          </div>
        </div>
        <div class="viewport">
          <svg class="plot" viewBox="-531 3 2553 1167" preserveAspectRatio="xMidYMin slice" role="img" aria-label="Mises stress contour plot">
            <defs><linearGradient id="tool" x1="0" y1="0" x2="0" y2="1"><stop offset="0" stop-color="#1e2d45"/><stop offset="1" stop-color="#293950"/></linearGradient></defs>
            <path fill="#004dd9" d="M540 419L500 402L430 376L375 362L345 350L320 348L275 340L210 336L170 333C80 368 20 450 25 560C28 650 90 770 180 843C250 903 340 930 420 930C480 928 525 915 560 898L590 868L625 828L650 792L680 745L697 710L712 680L730 635L742 594C760 588 785 587 805 588L835 652L865 700L885 725L910 758L930 775L970 817L1030 861C1060 872 1100 875 1120 874L1170 872L1230 858C1380 805 1485 650 1484 515C1483 400 1410 310 1318 290C1290 287 1250 296 1215 306L1170 322L1145 336L1100 349L1060 370L1010 395L978 411C960 396 925 394 885 401C840 410 800 431 765 446C730 431 690 414 640 403C600 396 560 396 540 419Z"/>
            <g transform="translate(510 246)">
              <path fill="#009bd9" d="M255 200C215 180 165 168 110 171C60 174 40 205 47 240C50 265 65 275 77 290C75 303 85 307 97 307C150 340 210 340 245 312C262 306 280 312 300 320C350 325 390 310 420 290C432 288 437 280 435 270C455 245 460 215 450 195C438 165 400 162 360 170C320 178 285 190 255 200Z"/>
              <path fill="#00d9c8" d="M255 200C210 186 150 180 110 185C72 192 65 225 75 255C90 300 150 322 200 312C235 305 245 280 260 274C275 275 300 305 340 304C390 300 425 270 431 235C435 205 415 180 375 180C320 180 285 192 255 200Z"/>
              <path fill="#00d977" d="M255 200C200 188 125 185 105 212C85 240 100 285 150 296C200 302 240 280 258 243C270 260 300 290 340 291C385 288 408 258 407 232C403 200 380 185 350 186C310 187 280 195 255 200Z"/>
              <path fill="#00d926" d="M255 200C200 192 130 195 120 235C118 262 145 284 180 284C225 280 250 245 256 208C268 245 300 275 335 276C370 275 388 250 387 228C382 195 350 189 330 190C300 190 275 196 255 200Z"/>
              <path fill="#26d900" d="M255 200C205 194 145 200 141 236C145 262 165 270 190 270C230 262 248 230 255 200C265 240 290 262 325 263C352 260 367 245 365 225C355 195 320 190 255 200Z"/>
              <path fill="#77d900" d="M255 200C215 198 165 205 162 237C165 252 180 258 198 257C230 250 245 225 255 200C268 230 290 248 322 249C338 245 347 235 345 225C335 200 295 195 255 200Z"/>
              <path fill="#c8d900" d="M255 200C225 200 185 212 183 235C185 243 195 244 207 243C232 238 246 218 255 200C270 222 285 235 312 237C325 235 328 228 325 220C318 205 285 198 255 200Z"/>
              <path fill="#d99b00" d="M255 200C230 203 203 215 200 230C205 236 220 233 228 228C242 220 250 210 255 200C268 215 280 226 300 228C308 226 308 218 302 214C288 205 270 200 255 200Z"/>
              <path fill="#d94d00" d="M255 200C240 202 222 210 220 219C230 225 245 215 255 200C265 210 278 217 290 216C292 210 275 202 255 200Z"/>
              <path fill="#d90000" d="M255 200C248 202 240 206 239 210C246 210 252 206 255 200C260 206 266 210 272 210C270 206 264 202 255 200Z"/>
            </g>
            <path fill="url(#tool)" stroke="#101624" stroke-width="4" d="M316 0L360 80L572 355L765 446L941 355L1102 77L1127 0Z"/>
          </svg>
          <div class="legend">
            <p>S, Mises<br>(Avg: 75%)</p>
            <div class="scale">
              <div class="swatches"><i class="s1"></i><i class="s2"></i><i class="s3"></i><i class="s4"></i><i class="s5"></i><i class="s6"></i><i class="s7"></i><i class="s8"></i><i class="s9"></i><i class="s10"></i><i class="s11"></i><i class="s12"></i></div>
              <ol class="values"><li>+2.437e+03</li><li>+2.234e+03</li><li>+2.031e+03</li><li>+1.828e+03</li><li>+1.625e+03</li><li>+1.422e+03</li><li>+1.219e+03</li><li>+1.015e+03</li><li>+8.124e+02</li><li>+6.093e+02</li><li>+4.062e+02</li><li>+2.031e+02</li><li>+4.023e-03</li></ol>
            </div>
          </div>
        </div>
      </div>
    </section>
  </main>
</div>
</body>
</html>
```
FILE: styles.css
```css
* { box-sizing: border-box; }
html, body { height: 100%; margin: 0; }
body { font: 7px/10px "Open Sans", "Noto Sans", sans-serif; color: #111; overflow: hidden; }
button, select { font: inherit; color: inherit; margin: 0; padding: 0; border: 0; background: none; }
button { display: flex; align-items: center; justify-content: center; }
svg { display: block; flex: none; overflow: visible; }
.sprites { position: absolute; width: 0; height: 0; overflow: hidden; }
.i { width: 13px; height: 13px; }
.i.sm { width: 9px; height: 9px; }
.i.xs { width: 7px; height: 7px; }
.i.tiny { width: 5px; height: 5px; }

.app { display: flex; flex-direction: column; height: 100vh; background: linear-gradient(90deg, #fafafa, #efefef); }

.titlebar { display: flex; align-items: center; gap: 4px; height: 14px; padding: 0 9px 0 1px; background: linear-gradient(90deg, #ecf3fb, #eef2fa 55%, #f3f2f6 75%, #f3f3f5); }
.titlebar h1 { margin: 0; font-size: 7px; font-weight: 400; }
.win { display: flex; gap: 21px; margin-left: auto; }
.menubar { display: flex; align-items: center; height: 15px; padding: 0 3px; border-bottom: 1px solid #ccc; background: linear-gradient(90deg, #f9fafb, #f2f2f2); }
.menus { display: flex; gap: 9px; margin-left: 6px; }
.menus u { text-underline-offset: 1px; }
.mdi { gap: 4px; color: #567; }
.mdi button { width: 8px; height: 8px; background: #fff; }

.bar-row { display: flex; height: 17px; align-items: stretch; }
.bar { display: flex; align-items: stretch; border-right: 1px solid #d0d0d0; border-bottom: 1px solid #d0d0d0; background: #fafafa; }
.bar > button { flex: 1 1 0; min-width: 0; }
.bar > .narrow { flex: 0 0 9px; }
.on { background: #cce4f8; box-shadow: inset 0 0 0 1px #b6d9f6; }
.grip { flex: none; width: 2px; margin: 3px 2px 3px 1px; background: repeating-linear-gradient(#aaa 0 1px, transparent 1px 3px); }
.grip.blue { background: repeating-linear-gradient(#33f 0 1px, transparent 1px 3px); }
.sep { flex: none; width: 1px; margin: 3px 0; background: #bbb; }
.num { color: #cf2a1b; font-family: "Liberation Sans", sans-serif; font-weight: 700; font-size: 11px; }
.ax text { fill: #cf2a1b; font: 700 7px "Liberation Sans", sans-serif; }
.ax.iso text { font-size: 5px; }
.w-file { width: 100px; }
.w-select { width: 162px; }
.w-color { width: 126px; margin-left: 6px; }
.w-frames { width: 68px; margin-left: 50px; }
.w-info { width: 21px; margin-left: 15px; }
.w-field { width: 184px; margin-left: 47px; }
.w-view { width: 99px; margin-left: 16px; }
.w-render { width: 68px; margin-left: 344px; }
.w-axes { width: 193px; margin-left: 115px; }
.w-groups { width: 130px; }
.w-persp { width: 37px; }

.combo { display: flex; align-items: stretch; flex: none; background: #fff; border: 1px solid #bcbcbc; }
.combo select { flex: 1; min-width: 0; padding-left: 2px; appearance: none; background: #fff; outline: 0; }
.chev { width: 7px; height: auto; padding: 2px 1px; border-left: 1px solid #ddd; }
.c-all { width: 63px; }
.c-vis { width: 81px; }
.c-f { width: 49px; }
.c-mod { width: 64px; height: 14px; margin: 0 8px 0 3px; }
.c-odb { width: 86px; height: 14px; margin-left: 3px; }
.c-sess { width: 72px; height: 14px; }
.spin-i { width: 5px; height: 10px; align-self: center; }

.work { display: flex; flex: 1; min-height: 0; }
.side { display: flex; flex-direction: column; width: 136px; padding: 3px 3px 0; border-right: 1px solid #bbb; background: #f8f8f8; }
.tabs { display: flex; align-items: flex-end; height: 15px; }
.tabs button { height: 14px; padding: 0 4px; }
.tabs .active { height: 16px; border: 1px solid #ddd; border-bottom: 0; background: #fff; }
.side-tools { display: flex; align-items: center; justify-content: space-between; height: 19px; }
.side-tools .i { width: 11px; height: 11px; }
.spin { color: #aaa; }
.tree-box { flex: 1; border: 1px solid #bbb; border-bottom: 0; background: #fff; }
.tree { display: grid; grid-auto-rows: 1fr; height: 126px; margin: 0; padding: 0; list-style: none; }
.tree li { display: flex; align-items: center; }
.exp { width: 6px; height: 6px; margin-right: 2px; }
i.exp { display: block; height: 1px; background: #ddd; }
.ti { width: 10px; height: 10px; margin-right: 3px; }

.stage { display: flex; flex: 1; flex-direction: column; min-width: 0; }
.context { display: flex; align-items: center; height: 19px; padding: 0 18px 0 4px; border-bottom: 1px solid #aaa; background: linear-gradient(#fff, #ebebeb); }
.player { display: flex; gap: 5px; margin-left: auto; align-items: stretch; }
.player .sep { height: 15px; margin: 0 3px 0 0; }
.canvas-row { display: flex; flex: 1; min-height: 0; }
.toolbox { width: 37px; padding: 0 1px; background: linear-gradient(90deg, #fdfdfd, #ececec); }
.tg { display: grid; grid-template-columns: 1fr 1fr; grid-auto-rows: 17px; padding: 2px 0 1px; border-bottom: 1px solid #c8c8c8; }
.tg.last { border: 0; }
.viewport { position: relative; flex: 1; min-width: 0; background: #0000d9; overflow: hidden; }
.plot { width: 100%; height: 100%; }

.legend { position: absolute; left: 17px; top: 7px; padding: 13px 14px 6px 12px; border: 1px solid #9a9af0; color: #f0f0ff; font: 12px/16px "DejaVu Sans", sans-serif; }
.legend p { margin: 0; font-size: 13px; }
.scale { display: flex; align-items: flex-end; gap: 6px; height: 166px; }
.swatches { display: grid; grid-auto-rows: 1fr; width: 26px; height: 152px; margin-bottom: 5px; background: linear-gradient(90deg, #b0b0f0 20px, transparent 20px); }
.swatches i { position: relative; border-top: 1px solid #b0b0f0; }
.swatches i::after { content: ""; position: absolute; inset: 0 7px 0 1px; background: var(--c); }
.swatches i:last-child { border-bottom: 1px solid #b0b0f0; }
.values { display: grid; grid-auto-rows: 1fr; height: 163px; margin: 0; padding: 0; list-style: none; }
.values li { min-height: 0; line-height: 12px; }
.s1 { --c: #f00; } .s2 { --c: #ff5d00; } .s3 { --c: #ffb900; } .s4 { --c: #e8ff00; }
.s5 { --c: #8bff00; } .s6 { --c: #2eff00; } .s7 { --c: #00ff2e; } .s8 { --c: #00ff8b; }
.s9 { --c: #00ffe8; } .s10 { --c: #00b9ff; } .s11 { --c: #005dff; } .s12 { --c: #00f; }
```
